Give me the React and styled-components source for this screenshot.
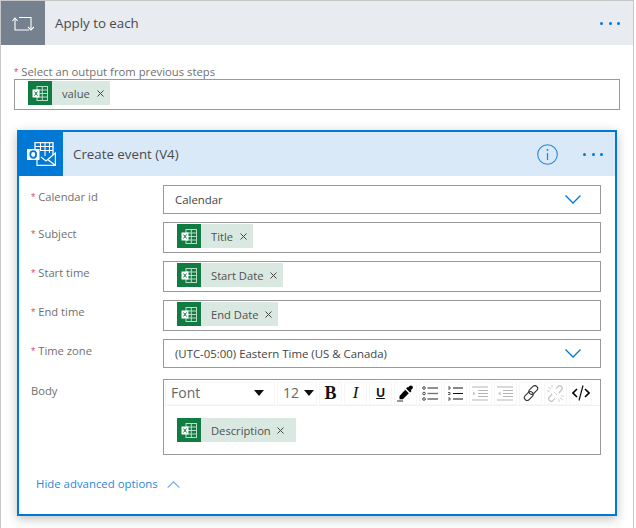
import React from 'react';
import styled, { createGlobalStyle } from 'styled-components';

const GlobalStyle = createGlobalStyle`
	html, body {
		margin:0;
		padding:0;
		background:#fff;
		font-family:"Open Sans", "Noto Sans", sans-serif;
		color:#444;
	}
	* { box-sizing:border-box; }
`

const Page = styled.div`
	width:634px;
	height:528px;
	border:1px solid #c8c8c8;
	border-bottom:none;
	overflow:hidden;
`
const LoopHeader = styled.div`
	display:flex;
	align-items:center;
	height:44px;
	background:#e8ebef;
`
const LoopIcon = styled.div`
	display:flex;
	align-items:center;
	justify-content:center;
	width:44px;
	height:44px;
	background:#76818f;
`
const Title = styled.div`
	flex:1;
	font-size:13.3px;
	line-height:18px;
	padding-left:${props => props.$inset}px;
	color:#4a4a4a;
`
const Dots = styled.div`
	display:flex;
	gap:5.5px;
	margin-right:${props => props.$right}px;
	& > i {
		display:block;
		width:3px;
		height:3px;
		border-radius:50%;
		background:#0078d4;
	}
`
const LoopBody = styled.div`
	padding:20px 13px 0 13px;
`
const TopLabel = styled.div`
	font-size:11.3px;
	line-height:14px;
	height:14px;
	color:#707070;
`
const Star = styled.span`
	font-family:"Liberation Sans", sans-serif;
	font-size:11px;
	color:#e8505f;
	margin-right:3px;
`
const InputBox = styled.div`
	display:flex;
	align-items:flex-start;
	height:31px;
	border:1px solid #999;
	background:#fff;
	padding:1px 0 0 13px;
`
const Chip = styled.div`
	display:inline-flex;
	align-items:center;
	height:24px;
	background:#d9e9e1;
	font-size:11.2px;
	color:#505050;
`
const ChipIcon = styled.div`
	display:flex;
	align-items:center;
	justify-content:center;
	width:24px;
	height:24px;
	background:#107c41;
	margin-right:10px;
`
const ChipClose = styled.svg`
	margin-left:${props => props.$wide ? 6 : 7}px;
	margin-right:${props => props.$wide ? 12 : 6}px;
`
const Card = styled.div`
	margin:20px 3px 0 3px;
	height:386px;
	border:2px solid #0078d4;
	box-shadow:0 3px 10px rgba(0,0,0,.25);
	background:#fff;
`
const CardHeader = styled.div`
	display:flex;
	align-items:center;
	height:44px;
	background:#d9e9f8;
`
const CardIcon = styled.div`
	display:flex;
	align-items:center;
	justify-content:center;
	width:44px;
	height:44px;
	background:#0078d4;
`
const Info = styled.svg`
	margin-right:25px;
`
const Form = styled.div`
	display:flex;
	flex-direction:column;
	padding:9px 14px 0 12px;
	gap:8px;
`
const Row = styled.div`
	display:flex;
	align-items:flex-start;
	margin-top:${props => props.$spaced ? 3 : 0}px;
`
const RowLabel = styled.div`
	width:132px;
	flex:none;
	font-size:11.2px;
	line-height:14px;
	padding-top:5px;
	color:#707070;
`
const Field = styled.div`
	flex:1;
`
const SelectBox = styled.div`
	display:flex;
	align-items:center;
	justify-content:space-between;
	height:29px;
	border:1px solid #999;
	padding:0 19px 0 11px;
	font-size:11.4px;
	color:#444;
`
const Editor = styled.div`
	height:76px;
	border:1px solid #999;
`
const Toolbar = styled.div`
	display:flex;
	align-items:center;
	height:26px;
	padding:1px 0 0 1px;
	border-bottom:1px solid #f2f2f2;
	gap:2px;
`
const ToolSelect = styled.div`
	display:flex;
	align-items:center;
	justify-content:space-between;
	width:${props => props.$w}px;
	height:23px;
	padding:0 ${props => props.$pr}px 2px 5px;
	font-size:14px;
	color:#666;
	border:1px solid #f6f6f6;
`
const Caret = styled.i`
	display:block;
	width:0;
	height:0;
	margin-top:2px;
	border-left:5px solid transparent;
	border-right:5px solid transparent;
	border-top:6px solid #111;
`
const ToolButton = styled.div`
	display:flex;
	align-items:center;
	justify-content:center;
	width:23px;
	height:23px;
	border:1px solid #f6f6f6;
	font-family:"Liberation Serif", serif;
	color:#111;
`
const BoldMark = styled.span`
	font-size:18px;
	font-weight:700;
`
const ItalicMark = styled.span`
	font-size:17px;
	font-style:italic;
`
const UnderMark = styled.span`
	font-family:"Liberation Sans", sans-serif;
	font-size:12px;
	font-weight:700;
	text-decoration:underline;
`
const EditorBody = styled.div`
	padding:12px 13px;
`
const AdvancedLink = styled.div`
	display:flex;
	align-items:center;
	gap:9px;
	margin:21px 0 0 17px;
	font-size:11.4px;
	line-height:16px;
	color:#2b88d8;
`

function ExcelGlyph() {
	return (
		<svg width="16" height="15" viewBox="0 0 16 15" fill="none">
			<rect x="5" y="0.5" width="10.5" height="14" stroke="#bcdccb" strokeWidth="1" />
			<path d="M5 4h10.500M5 7.500h10.500M5 11h10.500M10.300 .5v14" stroke="#bcdccb" strokeWidth="1" />
			<rect x="0.500" y="3.500" width="7" height="8" fill="#fff" />
			<path d="M2.500 5.500l3 4M5.500 5.500l-3 4" stroke="#107c41" strokeWidth="1" />
		</svg>
	)
}

function CloseGlyph({ wide }) {
	return (
		<ChipClose $wide={wide} width="7" height="7" viewBox="0 0 7 7">
			<path d="M.5 .5l6 6M6.500 .5l-6 6" stroke="#444" strokeWidth="1" />
		</ChipClose>
	)
}

function ExcelChip({ label, wide }) {
	return (
		<Chip>
			<ChipIcon><ExcelGlyph /></ChipIcon>
			{label}
			<CloseGlyph wide={wide} />
		</Chip>
	)
}

function DotsMenu({ right }) {
	return <Dots $right={right}><i /><i /><i /></Dots>
}

function Chevron({ up, color = '#0078d4', w = 16, h = 9 }) {
	return (
		<svg width={w} height={h} viewBox="0 0 16 9" fill="none">
			<path d={up ? 'M.5 8.500L8 1l7.500 7.500' : 'M.5 .5L8 8l7.500-7.500'} stroke={color} strokeWidth="1.300" />
		</svg>
	)
}

function Required({ children }) {
	return <><Star>*</Star>{children}</>
}

const toolIcons = [
	<svg key="pen" width="17" height="17" viewBox="0 0 17 17">
		<path d="M11 2.500l1.500-1.500c.8-.8 2-.8 2.800 0s.8 2 0 2.800L13.800 5.300l.7.7-1.400 1.400-4-4 1.400-1.400zM8.300 4.700l3.500 3.500-6 6H2.500v-3.300z" fill="#000" />
		<path d="M0 16h6" stroke="#333" strokeWidth="1" />
	</svg>,
	<svg key="ul" width="17" height="15" viewBox="0 0 17 15" fill="none">
		<circle cx="2" cy="2" r="1.300" stroke="#444" /><circle cx="2" cy="7.500" r="1.300" stroke="#444" /><circle cx="2" cy="13" r="1.300" stroke="#444" />
		<path d="M5.500 2H16M5.500 13H16" stroke="#222" /><path d="M5.500 7.500H16" stroke="#777" strokeWidth="1.400" />
	</svg>,
	<svg key="ol" width="17" height="15" viewBox="0 0 17 15" fill="none">
		<path d="M1 1h2v2H1M1 6.500h2v2H1M1 12h2v2H1" stroke="#333" strokeWidth=".8" />
		<path d="M6 2h10M6 7.500h10M6 13h10" stroke="#111" strokeWidth="1.200" />
	</svg>,
	<svg key="in" width="17" height="15" viewBox="0 0 17 15" fill="none">
		<path d="M0 1h16M6 4.500h10M6 7.500h10M6 10.500h10M0 14h16" stroke="#b5b5b5" strokeWidth="1" />
		<path d="M1 5.500l2.500 2-2.500 2z" fill="#c4c4c4" />
	</svg>,
	<svg key="out" width="17" height="15" viewBox="0 0 17 15" fill="none">
		<path d="M0 1h16M6 4.500h10M6 7.500h10M6 10.500h10M0 14h16" stroke="#b5b5b5" strokeWidth="1" />
		<path d="M3.500 5.500l-2.500 2 2.500 2z" fill="#c4c4c4" />
	</svg>,
	<svg key="link" width="16" height="16" viewBox="0 0 16 16" fill="none">
		<rect x="7.500" y="0" width="5.500" height="10" rx="2.700" transform="rotate(45 10.250 5)" stroke="#333" strokeWidth="1.100" />
		<rect x="3" y="6" width="5.500" height="10" rx="2.700" transform="rotate(45 5.750 11)" stroke="#333" strokeWidth="1.100" />
	</svg>,
	<svg key="unlink" width="17" height="17" viewBox="0 0 17 17" fill="none">
		<path d="M9 4l2-2.500c1-1 2.500-1 3.500 0s1 2.500 0 3.500l-2.500 3M8 13l-2 2.500c-1 1-2.500 1-3.500 0s-1-2.500 0-3.500L5 9" stroke="#c4c4c4" strokeWidth="1.200" />
		<path d="M1 2l3 2M5 0v3M0 6h3M16 15l-3-2M12 17v-3M17 11h-3M7 7l3 3" stroke="#d2d2d2" strokeWidth="1" />
	</svg>,
	<svg key="code" width="18" height="16" viewBox="0 0 18 16" fill="none">
		<path d="M5 4L1 8l4 4M13 4l4 4-4 4" stroke="#000" strokeWidth="1.600" />
		<path d="M11 .5L7 15.500" stroke="#111" strokeWidth="1.200" />
	</svg>,
]

export default function App() {
	return (
		<>
			<GlobalStyle />
			<Page>
				<LoopHeader>
					<LoopIcon>
						<svg width="22" height="15" viewBox="0 0 22 15" fill="none">
							<path d="M3 2.500V14H17M7 1.500H19V13.500" stroke="#fff" strokeWidth="1.100" />
							<path d="M.5 5L3 2l2.500 3M16 11l3 3 3-3" stroke="#fff" strokeWidth="1.100" />
						</svg>
					</LoopIcon>
					<Title $inset={10}>Apply to each</Title>
					<DotsMenu right={13} />
				</LoopHeader>
				<LoopBody>
					<TopLabel><Required>Select an output from previous steps</Required></TopLabel>
					<InputBox><ExcelChip label="value" /></InputBox>
					<Card>
						<CardHeader>
							<CardIcon>
								<svg width="29" height="24" viewBox="0 0 29 24" fill="none">
									<path d="M8 7V.7h18V13" stroke="#fff" strokeWidth="1.300" />
									<path d="M13.500 .7V9M18 .7V14M22.500 .7V11M8 4.500h18M13 8.500h13" stroke="#fff" strokeWidth="1.100" />
									<path d="M10 18v5.300H28.400V11L19 19l-5-4M28.400 23.300L20.500 17.500" stroke="#fff" strokeWidth="1.200" />
									<rect x="0" y="7" width="12.500" height="11" fill="#fff" />
									<ellipse cx="6.200" cy="12.500" rx="2.900" ry="3.300" stroke="#0078d4" strokeWidth="1.800" />
								</svg>
							</CardIcon>
							<Title $inset={10}>Create event (V4)</Title>
							<Info width="21" height="21" viewBox="0 0 21 21" fill="none">
								<circle cx="10.500" cy="10.500" r="9.800" stroke="#2b88d8" strokeWidth="1.100" />
								<path d="M10.500 9v7" stroke="#2b88d8" strokeWidth="1.300" />
								<circle cx="10.500" cy="6" r="1" fill="#2b88d8" />
							</Info>
							<DotsMenu right={12} />
						</CardHeader>
						<Form>
							<Row>
								<RowLabel><Required>Calendar id</Required></RowLabel>
								<Field>
									<SelectBox>Calendar<Chevron /></SelectBox>
								</Field>
							</Row>
							<Row>
								<RowLabel><Required>Subject</Required></RowLabel>
								<Field>
									<InputBox><ExcelChip label="Title" /></InputBox>
								</Field>
							</Row>
							<Row>
								<RowLabel><Required>Start time</Required></RowLabel>
								<Field>
									<InputBox><ExcelChip label="Start Date" /></InputBox>
								</Field>
							</Row>
							<Row>
								<RowLabel><Required>End time</Required></RowLabel>
								<Field>
									<InputBox><ExcelChip label="End Date" /></InputBox>
								</Field>
							</Row>
							<Row>
								<RowLabel><Required>Time zone</Required></RowLabel>
								<Field>
									<SelectBox>(UTC-05:00) Eastern Time (US &amp; Canada)<Chevron /></SelectBox>
								</Field>
							</Row>
							<Row $spaced>
								<RowLabel>Body</RowLabel>
								<Field>
									<Editor>
										<Toolbar>
											<ToolSelect $w={110} $pr={10}>Font<Caret /></ToolSelect>
											<ToolSelect $w={40} $pr={2}>12<Caret /></ToolSelect>
											<ToolButton><BoldMark>B</BoldMark></ToolButton>
											<ToolButton><ItalicMark>I</ItalicMark></ToolButton>
											<ToolButton><UnderMark>U</UnderMark></ToolButton>
											{toolIcons.map(icon => <ToolButton key={icon.key}>{icon}</ToolButton>)}
										</Toolbar>
										<EditorBody><ExcelChip label="Description" wide /></EditorBody>
									</Editor>
								</Field>
							</Row>
						</Form>
						<AdvancedLink>
							Hide advanced options
							<Chevron up color="#6ea8e0" w={13} h={7} />
						</AdvancedLink>
					</Card>
				</LoopBody>
			</Page>
		</>
	)
}
